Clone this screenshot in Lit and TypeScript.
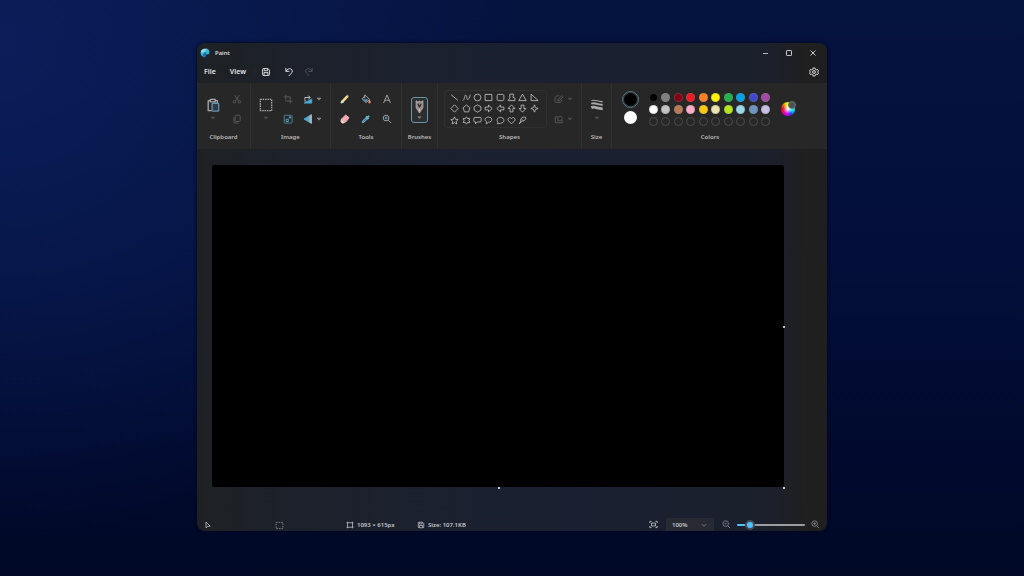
import { LitElement, html, svg, css, SVGTemplateResult } from "lit";
import { customElement, property, state } from "lit/decorators.js";
import { styleMap } from "lit/directives/style-map.js";

const ICONS: Record<string, SVGTemplateResult> = {
  // window and menu
  min: svg`<path d="M3.5 8h9"/>`,
  max: svg`<rect x="4" y="4" width="8" height="8" rx="1"/>`,
  close: svg`<path d="M4 4l8 8M12 4l-8 8"/>`,
  save: svg`<path d="M2.5 4a1.5 1.5 0 0 1 1.500-1.500h7L13.500 5v7a1.500 1.500 0 0 1-1.500 1.500H4A1.500 1.500 0 0 1 2.500 12z"/><path d="M5 2.500v3.500h5.500V2.500M4.800 13.500V9h6.400v4.500"/>`,
  undo: svg`<path d="M3 1.500v5.500h5.500M3.200 6.800C5 4 8 1.800 11 3.100c3 1.500 2.800 4.900.7 6.900L7.500 14.500"/>`,
  redo: svg`<path d="M13 1.500v5.500H7.500M12.800 6.800C11 4 8 1.800 5 3.100c-3 1.500-2.800 4.900-.7 6.900l4.200 4.500"/>`,
  gear: svg`<path d="M6.600 1.500h2.800l.5 2 1.800 1 2-.6 1.400 2.400L13.600 8l1.500 1.700-1.400 2.400-2-.6-1.800 1-.5 2H6.600l-.5-2-1.800-1-2 .6L.9 9.700 2.400 8 .9 6.300l1.400-2.400 2 .6 1.800-1z"/><circle cx="8" cy="8" r="2.300"/>`,
  chevron: svg`<path d="M3.500 6l4.500 4.500L12.500 6"/>`,
  caret: svg`<path d="M3 5.500h10L8 11z" fill="currentColor" fill-opacity="0.5"/>`,
  // clipboard
  paste: svg`<path d="M5 3H2.500v11.500h4M10.500 3H13v3M5 1.500h5.500v3H5z"/><rect x="7" y="6" width="7.500" height="9" rx="1" stroke="#5f93ad" fill="#2c3a44"/>`,
  cut: svg`<path d="M4 1.500l6.500 9.500M12 1.500L5.500 11"/><circle cx="4" cy="12.500" r="2"/><circle cx="12" cy="12.500" r="2"/>`,
  copy: svg`<rect x="5" y="2" width="8" height="10" rx="1.500"/><path d="M3 5v7.500A2 2 0 0 0 5 14.500h5"/>`,
  // image
  select: svg`<rect x="1.500" y="1.500" width="13" height="13" stroke-dasharray="1.700 1"/>`,
  crop: svg`<path d="M4.500 1v10.500H15M1 4.500h10.500V15"/>`,
  rotate: svg`<path d="M2 14.500L14 8v6.500z" fill="#4aa9d0" stroke="#4aa9d0"/><path d="M3 9V5.500h8M8.500 2.500l3 3-3 3M2 11h3" stroke="#c4d0d5"/>`,
  resize: svg`<rect x="2" y="2" width="12.500" height="12.500" rx="1" stroke="#4f8298"/><path d="M5 8.500h3.500V12M5 8.500V12h3.500M9 7l3-2.500M9.500 4.500H12V7" stroke="#5ea6c8"/>`,
  flip: svg`<path d="M1.500 8L9 3.500v9z" fill="#4aa9d0" stroke="#4aa9d0"/><path d="M10 3l3.500-2v14L10 13z" fill="#9fb8c4" stroke="#9fb8c4"/>`,
  // tools
  pencil: svg`<path d="M3.500 12.500L12 3.500" stroke="#f1dc94" stroke-width="4"/><path d="M1.500 14.500l1-3.500 2.500 2.500z" fill="#fff" stroke="#ddd"/><path d="M12.500 3l.6-.6" stroke="#f3ecd0" stroke-width="4"/>`,
  fill: svg`<path d="M7 2l6.500 6.500L8 14 2 8z"/><path d="M3 8.500h9.500L8 13z" fill="#4b93b5" stroke="none"/><path d="M6 1v6"/><path d="M13.700 10c1.300 2 1.700 4.500 0 4.500s-1.500-2.500 0-4.500z" fill="#e89b7c" stroke="#e89b7c"/>`,
  text: svg`<path d="M2.500 14.500L8 1.500l5.500 13M4.500 10h7"/>`,
  eraser: svg`<path d="M9 1.500L14.500 6 9 13 2 8.500z" fill="#f5a9b4" stroke="#f5a9b4"/><path d="M2 9l5.500 4-1.500 1.500H3.500L1.500 12z" fill="#f2e5e6" stroke="#dcc"/>`,
  dropper: svg`<path d="M2 14l1-3.500L9 5l2 2-6 6z" fill="#3f87a8" stroke="#6fb7d6"/><path d="M8 4l4 4M10.500 5.500L13 3" stroke="#69b3d3" stroke-width="3"/>`,
  zoom: svg`<circle cx="6.500" cy="6.500" r="4.500"/><path d="M10 10l4.500 4.500"/><circle cx="6.500" cy="6.500" r="1.300" stroke="#5fb1d6"/>`,
  brush: svg`<path d="M4 1v8l2.500 4L8 15.500 9.500 13 12 9V1l-2 2-2-1.500L6 3z" fill="#8d8583" stroke="#aaa19e"/><path d="M6 4.500l2 4 2-4" stroke="#2c2c2c"/><path d="M8 10.500v3" stroke="#e1b6a4"/>`,
  // shapes
  s0: svg`<path d="M2 3l12 10"/>`,
  s1: svg`<path d="M1 13C5 14 4 2 7 4s0 9 4 7 2-6 4-8"/>`,
  s2: svg`<circle cx="8" cy="8" r="6"/>`,
  s3: svg`<rect x="2" y="2.500" width="12" height="11"/>`,
  s4: svg`<rect x="2" y="2.500" width="12" height="11" rx="2.500"/>`,
  s5: svg`<path d="M5 2h7l-1.500 5.500L14 9v4.500H2L5 9z"/>`,
  s6: svg`<path d="M8 2l6.500 11.500h-13z"/>`,
  s7: svg`<path d="M2 2v11.500h12.500z"/>`,
  s8: svg`<path d="M8 1.500L14.500 8 8 14.500 1.500 8z"/>`,
  s9: svg`<path d="M8 2l6 4.500-2.300 7.500H4.300L2 6.500z"/>`,
  s10: svg`<path d="M8 1.500l6 3.500v6l-6 3.500L2 11V5z"/>`,
  s11: svg`<path d="M2 5.500h6v-3.500L14.500 8 8 14v-3.500H2z"/>`,
  s12: svg`<path d="M14 5.500H8V2L1.500 8 8 14v-3.500h6z"/>`,
  s13: svg`<path d="M5.500 14V8H2l6-6.500L14 8h-3.500v6z"/>`,
  s14: svg`<path d="M5.500 2v6H2l6 6.500L14 8h-3.500V2z"/>`,
  s15: svg`<path d="M8 1.500l1.700 4.800L14.500 8 9.700 9.700 8 14.500 6.300 9.700 1.500 8l4.800-1.700z"/>`,
  s16: svg`<path d="M8 1.500l1.900 4.300 4.600.5-3.400 3.200 1 4.700L8 11.800l-4.100 2.400 1-4.700L1.500 6.300l4.600-.5z"/>`,
  s17: svg`<path d="M8 1.500l2 3h4L12.200 8l1.800 3.500h-4l-2 3-2-3H2L3.800 8 2 4.500h4z"/>`,
  s18: svg`<path d="M3 2.500h10q1.500 0 1.500 1.500v5q0 1.500-1.500 1.500H7.500L4.500 14v-3.500H3Q1.500 10.500 1.500 9V4Q1.500 2.500 3 2.500z"/>`,
  s19: svg`<path d="M8 2c8 0 8 9 0 9l-4 3 .5-4C-.5 7.500 1.500 2 8 2z"/>`,
  s20: svg`<path d="M8 2.500c8 0 8 10.500 0 10.500-1.500 0-3 1-5.500 1l1-3C0 7 2.500 2.500 8 2.500z"/>`,
  s21: svg`<path d="M8 14L2.500 8.500C-.5 5 5 .5 8 4.500 11 .5 16.500 5 13.500 8.500z"/>`,
  s22: svg`<path d="M2 14l3-5V5l4-3h4l1 3-4 4H7.500zM7 6l3 3"/>`,
  outline: svg`<path d="M8.500 3H4L1.500 6v6l2 1.500H10l3-4M6 11l1-3 5.500-5.500 2 2L9 10z"/>`,
  fillShape: svg`<path d="M2 4.500v9.500h11V9M2 4.500h5M6 11V7l4-4 4 4-4 4z"/>`,
  lines: svg`<path d="M1.500 3c4-2 8 2 13 1" stroke-width="1.200"/><path d="M1.500 6.500c4-2 8 2 13 1" stroke-width="2.200"/><path d="M1.500 11c4-2 8 2 13 1" stroke-width="3.200"/>`,
  // status bar
  cursor: svg`<path d="M4 2v12l3.500-3.500h5z"/>`,
  frame: svg`<path d="M4.500 3.500h7M4.500 12.500h7M3 5v6M13 5v6"/><path d="M2 2.500h2v2H2zM12 2.500h2v2h-2zM2 11.500h2v2H2zM12 11.500h2v2h-2z"/>`,
  selection: svg`<rect x="2" y="2.500" width="12" height="11" stroke-dasharray="3 1.500"/>`,
  fit: svg`<path d="M1.500 5.500v-3h3M11.500 2.500h3v3M14.500 10.500v3h-3M4.500 13.500h-3v-3"/><rect x="4.500" y="5.500" width="7" height="5"/>`,
  zoomOut: svg`<circle cx="6.500" cy="6.500" r="5"/><path d="M10.300 10.300l4.200 4.200M4.500 6.500h4"/>`,
  zoomIn: svg`<circle cx="6.500" cy="6.500" r="5"/><path d="M10.300 10.300l4.200 4.200M4 6.500h5M6.500 4v5"/>`,
  logo: svg`<path d="M8 1c5-.5 7.500 3 7 6.500-.3 2.500-2.500 2.500-4.500 2.800-1.500.3-.8 2-1.800 3.400C7.500 15.500 1 14 1 8c0-4 3-6.700 7-7z" fill="#39b5dc" stroke="none"/><path d="M2 4c2-3 6-3.500 9-2L7 6.500 1.200 8z" fill="#8adbe8" stroke="none"/><path d="M5 9l4-3 1 4-2 5.300C6 15.500 4 14 5 9z" fill="#1a6fa8" stroke="none"/>`,
};

const SHAPES = [
  "Line", "Curve", "Oval", "Rectangle", "Rounded rectangle", "Polygon", "Triangle", "Right triangle",
  "Diamond", "Pentagon", "Hexagon", "Right arrow", "Left arrow", "Up arrow", "Down arrow", "Four-point star",
  "Five-point star", "Six-point star", "Rounded callout", "Oval callout", "Cloud callout", "Heart", "Lightning",
];

const COLORS = [
  "#000000", "#7f7f7f", "#880015", "#ed1c24", "#ff7f27", "#fff200", "#22b14c", "#00a2e8", "#3f48cc", "#a349a4",
  "#ffffff", "#c3c3c3", "#b97a57", "#ffaec9", "#ffc90e", "#efe4b0", "#b5e61d", "#99d9ea", "#7092be", "#c8bfe7",
];

@customElement("paint-icon")
export class PaintIcon extends LitElement {
  @property() name = "";
  @property({ type: Number }) size = 10;
  static styles = css`
    :host { display: inline-flex; flex: none; }
    svg { display: block; fill: none; stroke: currentColor; stroke-width: 1.5; stroke-linejoin: round; }
  `;
  render() {
    return html`<svg width=${this.size} height=${this.size} viewBox="0 0 16 16" aria-hidden="true">${ICONS[this.name]}</svg>`;
  }
}

@customElement("app-root")
export class AppRoot extends LitElement {
  @state() private zoom = 14;

  static styles = css`
    :host {
      display: block;
      min-height: 100vh;
      font: 600 6px/8px "Noto Sans", "Open Sans", sans-serif;
      color: #d2d3d5;
    }
    * { box-sizing: border-box; }
    button, select, input { font: inherit; color: inherit; margin: 0; padding: 0; border: 0; background: none; }
    button { display: inline-flex; align-items: center; justify-content: center; }
    .desktop {
      display: flex;
      min-height: 100vh;
      padding: 43px 197px 45px;
      background:
        radial-gradient(ellipse 50% 85% at 0 8%, rgba(11, 31, 92, 0.9) 0, rgba(8, 26, 80, 0) 100%),
        linear-gradient(180deg, #05133f 0, #030f3a 45%, #010a2e 78%, #010927 100%);
    }
    .window {
      flex: 1;
      min-width: 0;
      display: flex;
      flex-direction: column;
      overflow: hidden;
      border-radius: 8px;
      background: linear-gradient(90deg, #1e2124 0, #1c212b 16%, #192031 60%, #1b202c 90%, #201f20 97%);
      box-shadow: 0 0 3px 1px rgba(2, 8, 30, 0.8);
    }
    .title { display: flex; align-items: center; height: 20px; padding: 0 2px 0 3px; }
    .title .name { flex: 1; padding-left: 5px; font-weight: 500; color: #e6e6e6; }
    .title button { width: 24px; height: 20px; }
    .menu { display: flex; align-items: center; height: 20px; padding: 0 8px 3px 7px; font-size: 7px; color: #e4e4e4; }
    .menu .view { margin-left: 14px; }
    .menu .save { margin-left: 8px; padding-left: 6px; border-left: 1px solid #24272c; }
    .menu .undo { margin-left: 13px; }
    .menu .redo { margin-left: 10px; color: #54585f; }
    .menu .gear { margin-left: auto; }
    .ribbon { display: flex; height: 66px; background: #272727; color: #a9a9a9; }
    .group { display: flex; flex-direction: column; border-right: 1px solid #313131; padding-top: 6px; }
    .group:last-child { border-right: 0; }
    .body { display: flex; height: 41px; justify-content: center; }
    .label { height: 14px; line-height: 14px; text-align: center; color: #b9b9b9; }
    .clipboard { width: 54px; }
    .clipboard .body { padding-left: 2px; }
    .image { width: 80px; }
    .image .body { justify-content: flex-start; padding-left: 3px; }
    .tools { width: 71px; }
    .brushes { width: 36px; }
    .shapes { width: 144px; }
    .size { width: 30px; }
    .colors { width: 196px; }
    .tall { display: flex; flex-direction: column; justify-content: flex-start; width: 24px; gap: 3px; padding-top: 9px; }
    .pair { display: grid; grid-template-rows: 20px 20px; width: 24px; place-items: center; }
    .image .pair:last-child { margin-left: 4px; }
    .image .pair { width: 20px; }
    .drop { gap: 3px; }
    .trio { display: grid; grid-template: 20px 20px / repeat(3, 21px); place-items: center; }
    .dim { color: #5a5a5a; }
    .brush {
      flex-direction: column;
      width: 17px;
      height: 26px;
      margin-top: 8px;
      gap: 2px;
      border: 1px solid #6797a8;
      border-radius: 3px;
      background: #2c2e2f;
    }
    .shape-box {
      display: grid;
      grid-template: repeat(3, 1fr) / repeat(8, 1fr);
      width: 103px;
      height: 38px;
      margin-top: 1px;
      padding: 1px 6px 1px 4px;
      border: 1px solid #303030;
      border-radius: 3px;
      place-items: center;
      color: #c0c0c0;
    }
    .shapes .pair { margin-left: 4px; }
    .colors .body { justify-content: flex-start; padding: 2px 0 0 9px; }
    .current { display: flex; flex-direction: column; align-items: center; width: 18px; gap: 3px; }
    .primary { width: 17px; height: 17px; border-radius: 50%; border: 1px solid #568089; background: #000; box-shadow: inset 0 0 0 1px #3a4346; }
    .secondary { width: 13px; height: 13px; border-radius: 50%; background: #fff; }
    .palette { display: grid; grid-template: repeat(3, 1fr) / repeat(10, 1fr); place-items: center; width: 125px; height: 37px; margin-left: 8px; }
    .swatch { width: 9px; height: 9px; border-radius: 50%; border: 1px solid #4c4c4c; }
    .swatch.filled { border-color: rgba(140, 140, 140, 0.3); }
    .wheel {
      position: relative;
      width: 14px;
      height: 14px;
      margin: 11px 0 0 9px;
      border-radius: 50%;
      background: radial-gradient(circle, #fff 0, rgba(255, 255, 255, 0) 50%), conic-gradient(#af4 0, #4f8 12%, #0df 30%, #33f 42%, #c0f 54%, #f06 66%, #d12 78%, #fd0 94%, #af4 100%);
    }
    .wheel::after { content: ""; position: absolute; top: -1px; right: -1px; width: 6px; height: 6px; border-radius: 50%; background: #4b5352; border: 1px solid #6b7270; }
    .stage { flex: 1; display: flex; padding: 16px 43px 31px 15px; }
    .canvas { position: relative; flex: 1; background: #000; border-radius: 2px; }
    .handle { position: absolute; width: 2px; height: 2px; background: #fff; border-radius: 1px; }
    .handle.e { right: -1px; top: 50%; }
    .handle.s { left: 50%; bottom: -2px; }
    .handle.se { right: -1px; bottom: -2px; }
    .status { display: flex; align-items: center; height: 13px; padding: 0 7px; color: #c4c6ca; }
    .cell { display: flex; align-items: center; gap: 3px; padding-top: 1px; white-space: nowrap; }
    .cell.pos { width: 71px; }
    .cell.sel { width: 71px; color: #83878e; }
    .cell.dims { width: 71px; }
    .zoombar { display: flex; align-items: center; margin-left: auto; }
    .pick { position: relative; display: flex; align-items: center; width: 48px; margin: 0 8px; background: #272a33; border-radius: 2px 2px 0 0; }
    .pick select { appearance: none; width: 100%; height: 13px; padding: 1px 0 0 6px; outline: 0; }
    .pick paint-icon { position: absolute; right: 6px; pointer-events: none; color: #858890; }
    .zoombar input { appearance: none; width: 68px; height: 11px; margin: 0 6px; }
    .zoombar input::-webkit-slider-runnable-track {
      height: 2px;
      border-radius: 1px;
      background: linear-gradient(90deg, #4cc2ff var(--fill), #9b9da1 var(--fill));
    }
    .zoombar input::-webkit-slider-thumb {
      appearance: none;
      width: 10px;
      height: 10px;
      margin-top: -4px;
      border-radius: 50%;
      border: 2px solid #454b55;
      background: #4cc2ff;
    }
    .muted { color: #858a91; }
  `;

  private tool(name: string, label: string, cls = "", size = 10) {
    return html`<button class=${cls} aria-label=${label}><paint-icon name=${name} .size=${size}></paint-icon></button>`;
  }

  private dropTool(name: string, label: string) {
    return html`<button class="drop" aria-label=${label}>
      <paint-icon name=${name} .size=${10}></paint-icon><paint-icon name="caret" .size=${6}></paint-icon>
    </button>`;
  }

  private tallTool(name: string, label: string) {
    return html`<button class="tall" aria-label=${label}>
      <paint-icon name=${name} .size=${14}></paint-icon><paint-icon class="dim" name="caret" .size=${6}></paint-icon>
    </button>`;
  }

  render() {
    return html`
      <div class="desktop">
        <main class="window">
          <header class="title">
            <paint-icon name="logo" .size=${10}></paint-icon>
            <span class="name">Paint</span>
            ${this.tool("min", "Minimize", "", 9)}${this.tool("max", "Maximize", "", 10)}${this.tool("close", "Close", "", 10)}
          </header>
          <nav class="menu">
            <button>File</button><button class="view">View</button>
            ${this.tool("save", "Save", "save")}${this.tool("undo", "Undo", "undo")}${this.tool("redo", "Redo", "redo")}
            ${this.tool("gear", "Settings", "gear")}
          </nav>
          <section class="ribbon">
            <div class="group clipboard">
              <div class="body">
                ${this.tallTool("paste", "Paste")}
                <div class="pair dim">${this.tool("cut", "Cut")}${this.tool("copy", "Copy")}</div>
              </div>
              <div class="label">Clipboard</div>
            </div>
            <div class="group image">
              <div class="body">
                ${this.tallTool("select", "Select")}
                <div class="pair">${this.tool("crop", "Crop", "dim")}${this.tool("resize", "Resize")}</div>
                <div class="pair">${this.dropTool("rotate", "Rotate")}${this.dropTool("flip", "Flip")}</div>
              </div>
              <div class="label">Image</div>
            </div>
            <div class="group tools">
              <div class="body">
                <div class="trio">
                  ${this.tool("pencil", "Pencil")}${this.tool("fill", "Fill")}${this.tool("text", "Text")}
                  ${this.tool("eraser", "Eraser")}${this.tool("dropper", "Color picker")}${this.tool("zoom", "Magnifier")}
                </div>
              </div>
              <div class="label">Tools</div>
            </div>
            <div class="group brushes">
              <div class="body">
                <button class="brush" aria-label="Brushes"><paint-icon name="brush" .size=${13}></paint-icon><paint-icon name="caret" .size=${5}></paint-icon></button>
              </div>
              <div class="label">Brushes</div>
            </div>
            <div class="group shapes">
              <div class="body">
                <div class="shape-box">${SHAPES.map((label, i) => this.tool("s" + i, label, "", 9))}</div>
                <div class="pair dim">${this.dropTool("outline", "Shape outline")}${this.dropTool("fillShape", "Shape fill")}</div>
              </div>
              <div class="label">Shapes</div>
            </div>
            <div class="group size">
              <div class="body">${this.tallTool("lines", "Size")}</div>
              <div class="label">Size</div>
            </div>
            <div class="group colors">
              <div class="body">
                <div class="current"><button class="primary" aria-label="Color 1"></button><button class="secondary" aria-label="Color 2"></button></div>
                <div class="palette">
                  ${COLORS.map((c) => html`<button class="swatch filled" aria-label=${c} style=${styleMap({ backgroundColor: c })}></button>`)}
                  ${Array.from({ length: 10 }, (_, i) => html`<button class="swatch" aria-label=${"Custom color " + (i + 1)}></button>`)}
                </div>
                <button class="wheel" aria-label="Edit colors"></button>
              </div>
              <div class="label">Colors</div>
            </div>
          </section>
          <section class="stage">
            <div class="canvas"><i class="handle e"></i><i class="handle s"></i><i class="handle se"></i></div>
          </section>
          <footer class="status">
            <span class="cell pos"><paint-icon name="cursor" .size=${8}></paint-icon></span>
            <span class="cell sel"><paint-icon name="selection" .size=${9}></paint-icon></span>
            <span class="cell dims"><paint-icon name="frame" .size=${8}></paint-icon>1093 × 615px</span>
            <span class="cell"><paint-icon name="save" .size=${8}></paint-icon>Size: 107.1KB</span>
            <div class="zoombar">
              ${this.tool("fit", "Fit to window", "", 9)}
              <div class="pick">
                <select aria-label="Zoom level"><option>100%</option></select>
                <paint-icon name="chevron" .size=${8}></paint-icon>
              </div>
              ${this.tool("zoomOut", "Zoom out", "muted", 9)}
              <input type="range" aria-label="Zoom" min="0" max="100" .value=${String(this.zoom)}
                style=${styleMap({ "--fill": this.zoom - 3 + "%" })}
                @input=${(e: Event) => { this.zoom = Number((e.target as HTMLInputElement).value); }}>
              ${this.tool("zoomIn", "Zoom in", "muted", 9)}
            </div>
          </footer>
        </main>
      </div>
    `;
  }
}
